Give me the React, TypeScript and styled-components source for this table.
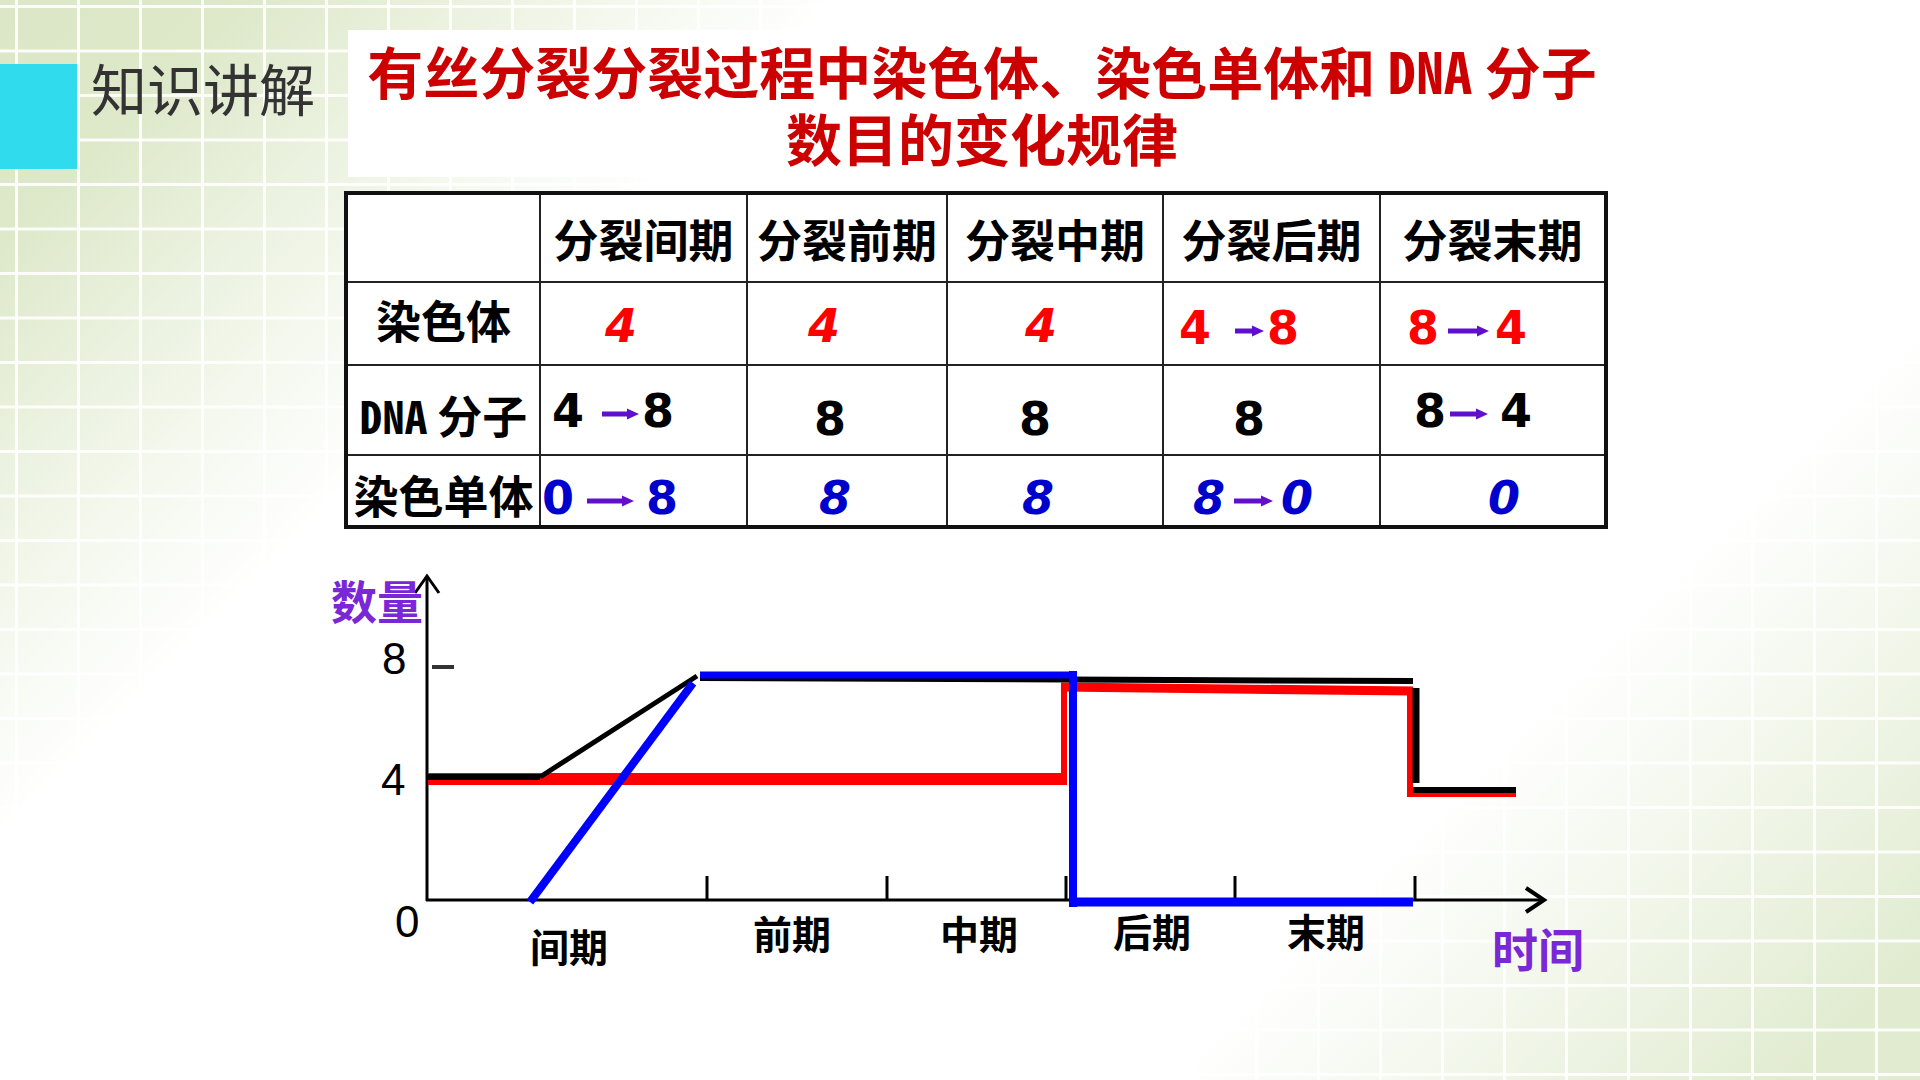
import React from "react";
import styled, { createGlobalStyle } from "styled-components";

const CJK = `"Noto Sans CJK SC", "Noto Sans", sans-serif`;
const HALF = `"Noto Sans Mono CJK SC", "Noto Sans CJK SC", monospace`;
const DIGIT = `"DejaVu Sans", "Liberation Sans", sans-serif`;

const GlobalStyle = createGlobalStyle`
  html, body {
    margin: 0;
    padding: 0;
    background: #fff;
  }
  body {
    font-family: ${CJK};
  }
`;

type Tone = "red" | "black" | "blue";

const toneColor: Record<Tone, string> = {
  red: "#ff0000",
  black: "#000000",
  blue: "#0000cc",
};

type Single = { v: string; indent: number; slant?: boolean; dy?: number };
type Change = {
  from: string;
  to: string;
  indent: number;
  arrow: number;
  before: number;
  after: number;
  slant?: boolean;
  dy?: number;
};
type Entry = Single | Change;

interface Row {
  label: React.ReactNode;
  tone: Tone;
  dy: number;
  labelDy: number;
  cells: Entry[];
}

const phases = ["分裂间期", "分裂前期", "分裂中期", "分裂后期", "分裂末期"];

const Slide = styled.main`
  width: 1920px;
  height: 1080px;
  box-sizing: border-box;
  padding-top: 30px;
  overflow: hidden;
  background:
    linear-gradient(
      135deg,
      rgba(255, 255, 255, 0) 8%,
      #fff 28%,
      #fff 75%,
      rgba(255, 255, 255, 0) 96%
    ),
    linear-gradient(90deg, rgba(255, 255, 255, 0.9) 0 3px, transparent 3px) 15px 0 / 62px 100%,
    linear-gradient(180deg, rgba(255, 255, 255, 0.9) 0 3px, transparent 3px) 0 5px / 100% 44.5px,
    linear-gradient(135deg, #dbe7c6, #e6efd8 45%, #e0ebcf);
`;

const Header = styled.header`
  display: flex;
  align-items: flex-start;
`;

const Topic = styled.div`
  width: 348px;
  flex: none;
  display: flex;
  align-items: flex-start;
  gap: 14px;
  padding-top: 29px;
`;

const TopicMark = styled.span`
  width: 77px;
  height: 105px;
  margin-top: 5px;
  background: #30dbee;
  flex: none;
`;

const TopicLabel = styled.h2`
  margin: 0;
  font-size: 56px;
  font-weight: 400;
  line-height: 1;
  color: #333;
  white-space: nowrap;
`;

const TitleBox = styled.div`
  width: 1268px;
  height: 147px;
  box-sizing: border-box;
  padding-top: 6px;
  background: #fff;
  text-align: center;
`;

const Title = styled.h1`
  margin: 0;
  font-size: 56px;
  line-height: 67px;
  font-weight: 700;
  color: #cc0000;
  white-space: nowrap;
`;

const Latin = styled.span`
  font-family: ${HALF};
`;

const Body = styled.section`
  padding-left: 300px;
`;

const Table = styled.div`
  display: grid;
  grid-template-columns: 191px 205px 198px 214px 215px 223px;
  grid-template-rows: 86px 81px 88px 69px;
  gap: 2px;
  width: max-content;
  margin: 14px 0 0 44px;
  background: #222;
  border: 4px solid #111;
`;

const Cell = styled.div<{ $indent?: number; $dy?: number }>`
  background: #fff;
  display: flex;
  align-items: center;
  justify-content: ${({ $indent }) => ($indent === undefined ? "center" : "flex-start")};
  padding-left: ${({ $indent }) => $indent ?? 0}px;
  padding-top: ${({ $dy = 0 }) => Math.max(0, $dy * 2)}px;
  padding-bottom: ${({ $dy = 0 }) => Math.max(0, -$dy * 2)}px;
  box-sizing: border-box;
  min-width: 0;
  white-space: nowrap;
`;

const HeadText = styled.span`
  font-family: ${CJK};
  font-size: 45px;
  font-weight: 700;
  line-height: 1;
  color: #000;
`;

const Num = styled.span<{ $tone: Tone; $slant?: boolean }>`
  font-family: ${DIGIT};
  font-size: 46px;
  font-weight: 700;
  font-style: ${({ $slant }) => ($slant ? "italic" : "normal")};
  line-height: 1;
  color: ${({ $tone }) => toneColor[$tone]};
`;

const ChangeRow = styled.span`
  display: flex;
  align-items: center;
`;

const ArrowSvg = styled.svg<{ $before: number; $after: number }>`
  display: block;
  flex: none;
  margin: 6px ${({ $after }) => $after}px 0 ${({ $before }) => $before}px;
`;

const ChartSvg = styled.svg`
  display: block;
  margin-top: 31px;
  overflow: visible;
`;

const AxisText = styled.text<{ $size: number; $purple?: boolean; $digit?: boolean }>`
  font-family: ${({ $digit }) => ($digit ? `"Liberation Sans", Arial, sans-serif` : CJK)};
  font-size: ${({ $size }) => $size}px;
  font-weight: ${({ $digit }) => ($digit ? 400 : 700)};
  fill: ${({ $purple }) => ($purple ? "#7a28d6" : "#000")};
`;

const Arrow = ({ length, before, after }: { length: number; before: number; after: number }) => (
  <ArrowSvg
    width={length}
    height={12}
    viewBox={`0 0 ${length} 12`}
    $before={before}
    $after={after}
  >
    <path
      d={`M0 3.5 H${length - 12} V0.5 L${length} 6 L${length - 12} 11.5 V8.5 H0 Z`}
      fill="#6010cc"
    />
  </ArrowSvg>
);

const rows: Row[] = [
  {
    label: "染色体",
    tone: "red",
    dy: 2,
    labelDy: -4,
    cells: [
      { v: "4", indent: 64, slant: true },
      { v: "4", indent: 60, slant: true },
      { v: "4", indent: 77, slant: true },
      { from: "4", to: "8", indent: 15, arrow: 29, before: 24, after: 3, dy: 4 },
      { from: "8", to: "4", indent: 26, arrow: 41, before: 9, after: 6, dy: 4 },
    ],
  },
  {
    label: (
      <>
        <Latin>DNA</Latin> 分子
      </>
    ),
    tone: "black",
    dy: 1,
    labelDy: 4,
    cells: [
      { from: "4", to: "8", indent: 11, arrow: 37, before: 18, after: 3 },
      { v: "8", indent: 66, dy: 9 },
      { v: "8", indent: 71, dy: 9 },
      { v: "8", indent: 69, dy: 9 },
      { from: "8", to: "4", indent: 33, arrow: 38, before: 4, after: 12 },
    ],
  },
  {
    label: "染色单体",
    tone: "blue",
    dy: 7,
    labelDy: 4,
    cells: [
      { from: "0", to: "8", indent: 1, arrow: 47, before: 13, after: 12 },
      { v: "8", indent: 71, slant: true },
      { v: "8", indent: 74, slant: true },
      { from: "8", to: "0", indent: 29, arrow: 39, before: 9, after: 8, slant: true },
      { v: "0", indent: 107, slant: true },
    ],
  },
];

const ValueCell = ({ entry, tone, dy }: { entry: Entry; tone: Tone; dy: number }) => {
  const shift = entry.dy ?? dy;
  if ("v" in entry) {
    return (
      <Cell $indent={entry.indent} $dy={shift}>
        <Num $tone={tone} $slant={entry.slant}>
          {entry.v}
        </Num>
      </Cell>
    );
  }
  return (
    <Cell $indent={entry.indent} $dy={shift}>
      <ChangeRow>
        <Num $tone={tone} $slant={entry.slant}>
          {entry.from}
        </Num>
        <Arrow length={entry.arrow} before={entry.before} after={entry.after} />
        <Num $tone={tone} $slant={entry.slant}>
          {entry.to}
        </Num>
      </ChangeRow>
    </Cell>
  );
};

const ticks = [407, 587, 766, 935, 1115];

const phaseLabels = [
  { text: "间期", x: 230, y: 402 },
  { text: "前期", x: 453, y: 389 },
  { text: "中期", x: 640, y: 389 },
  { text: "后期", x: 813, y: 387 },
  { text: "末期", x: 987, y: 387 },
];

const Chart = () => (
  <ChartSvg width={1320} height={440} viewBox="0 0 1320 440">
    <g stroke="#000" strokeWidth={3} fill="none">
      <line x1={127} y1={17} x2={127} y2={341} />
      <polyline points="115,33 127,16 139,33" />
      <line x1={126} y1={340} x2={1243} y2={340} />
      <polyline points="1226,328 1244,340 1226,352" strokeWidth={4} />
      {ticks.map((x) => (
        <line key={x} x1={x} y1={316} x2={x} y2={340} />
      ))}
    </g>
    <line x1={132} y1={107} x2={154} y2={107} stroke="#333" strokeWidth={4} />

    <g fill="none" stroke="#ff0000">
      <path d="M128 219 H766" strokeWidth={12} />
      <path d="M764 225 V124" strokeWidth={6} />
      <path d="M761 127 L1113 131" strokeWidth={9} />
      <path d="M1110 128 V237" strokeWidth={6} />
      <path d="M1108 234 H1216" strokeWidth={6} />
    </g>

    <g fill="none" stroke="#000">
      <path d="M128 217 H240" strokeWidth={6} />
      <path d="M240 217 L397 116" strokeWidth={5} />
      <path d="M400 118 L1113 121" strokeWidth={6} />
      <path d="M1116 128 V223" strokeWidth={7} />
      <path d="M1113 230 H1216" strokeWidth={6} />
    </g>

    <g fill="none" stroke="#0000ff">
      <path d="M230 342 L393 123" strokeWidth={8} />
      <path d="M400 115 H777" strokeWidth={7} />
      <path d="M773 111 V347" strokeWidth={8} />
      <path d="M769 342 H1113" strokeWidth={9} />
    </g>

    <AxisText x={31} y={59} $size={46} $purple>
      数量
    </AxisText>
    <AxisText x={82} y={114} $size={44} $digit>
      8
    </AxisText>
    <AxisText x={81} y={235} $size={44} $digit>
      4
    </AxisText>
    <AxisText x={95} y={377} $size={44} $digit>
      0
    </AxisText>
    {phaseLabels.map((p) => (
      <AxisText key={p.text} x={p.x} y={p.y} $size={39}>
        {p.text}
      </AxisText>
    ))}
    <AxisText x={1192} y={407} $size={46} $purple>
      时间
    </AxisText>
  </ChartSvg>
);

export default function App() {
  return (
    <>
      <GlobalStyle />
      <Slide>
        <Header>
          <Topic>
            <TopicMark />
            <TopicLabel>知识讲解</TopicLabel>
          </Topic>
          <TitleBox>
            <Title>
              有丝分裂分裂过程中染色体、染色单体和 <Latin>DNA</Latin> 分子
              <br />
              数目的变化规律
            </Title>
          </TitleBox>
        </Header>
        <Body>
          <Table>
            <Cell />
            {phases.map((p) => (
              <Cell key={p}>
                <HeadText>{p}</HeadText>
              </Cell>
            ))}
            {rows.map((row, i) => (
              <React.Fragment key={i}>
                <Cell $dy={row.labelDy}>
                  <HeadText>{row.label}</HeadText>
                </Cell>
                {row.cells.map((entry, j) => (
                  <ValueCell key={j} entry={entry} tone={row.tone} dy={row.dy} />
                ))}
              </React.Fragment>
            ))}
          </Table>
          <Chart />
        </Body>
      </Slide>
    </>
  );
}
